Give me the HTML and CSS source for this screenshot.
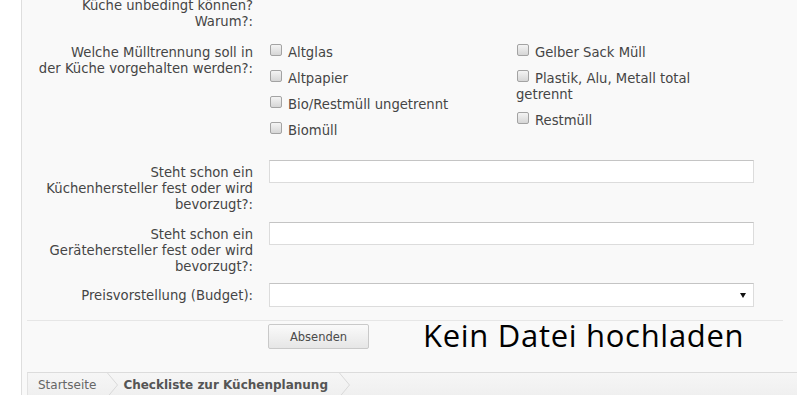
FILE: index.html
```html
<!DOCTYPE html>
<html lang="de">
<head>
<meta charset="utf-8">
<title>Checkliste zur Küchenplanung</title>
<link rel="stylesheet" href="styles.css">
</head>
<body>
<div class="page">
  <form class="form">
    <div class="row row-first">
      <div class="label">Was muss Ihre<br>Küche unbedingt können?<br>Warum?:</div>
      <div class="ctrl"></div>
    </div>
    <div class="row row-checks">
      <div class="label">Welche Mülltrennung soll in<br>der Küche vorgehalten werden?:</div>
      <div class="ctrl checks">
        <ul class="check-col">
          <li><input type="checkbox" class="cb">Altglas</li>
          <li><input type="checkbox" class="cb">Altpapier</li>
          <li><input type="checkbox" class="cb">Bio/Restmüll ungetrennt</li>
          <li><input type="checkbox" class="cb">Biomüll</li>
        </ul>
        <ul class="check-col">
          <li><input type="checkbox" class="cb">Gelber Sack Müll</li>
          <li><input type="checkbox" class="cb">Plastik, Alu, Metall total getrennt</li>
          <li><input type="checkbox" class="cb">Restmüll</li>
        </ul>
      </div>
    </div>
    <div class="row row-text">
      <div class="label">Steht schon ein<br>Küchenhersteller fest oder wird<br>bevorzugt?:</div>
      <div class="ctrl"><input type="text" class="textbox"></div>
    </div>
    <div class="row row-text2">
      <div class="label">Steht schon ein<br>Gerätehersteller fest oder wird<br>bevorzugt?:</div>
      <div class="ctrl"><input type="text" class="textbox"></div>
    </div>
    <div class="row row-select">
      <div class="label">Preisvorstellung (Budget):</div>
      <div class="ctrl">
        <div class="selectbox">
          <svg class="select-arrow" width="6" height="5" viewBox="0 0 6 5"><polygon points="0,0 6,0 3,5" fill="#111"/></svg>
        </div>
      </div>
    </div>
    <div class="submit-row">
      <button type="button" class="button">Absenden</button>
      <span class="note">Kein Datei hochladen</span>
    </div>
  </form>
  <nav class="breadcrumb">
    <span class="crumb">Startseite</span>
    <svg class="chev" width="12" height="24" viewBox="0 0 12 24"><polyline points="0.5,0 10.5,12 0.5,24" fill="none" stroke="#d9d9d9" stroke-width="1"/></svg>
    <span class="crumb current">Checkliste zur Küchenplanung</span>
    <svg class="chev" width="12" height="24" viewBox="0 0 12 24"><polyline points="0.5,0 10.5,12 0.5,24" fill="none" stroke="#d9d9d9" stroke-width="1"/></svg>
  </nav>
</div>
</body>
</html>
```
FILE: styles.css
```css
html, body {
  margin: 0;
  padding: 0;
  background: #ffffff;
}

.page {
  margin-left: 21px;
  border-left: 1px solid #dedede;
  background: #f9f9f9;
  height: 395px;
  overflow: hidden;
  font-family: "DejaVu Sans", Verdana, sans-serif;
  font-size: 13.2px;
  line-height: 16px;
  color: #454545;
}

.form {
  margin: 0;
}

.row {
  display: grid;
  grid-template-columns: 231px 485px;
  column-gap: 16px;
  margin-bottom: 8px;
}

.label {
  text-align: right;
  padding-top: 5px;
  white-space: nowrap;
}

.row-first {
  margin-top: -23px;
  margin-bottom: 10px;
}

.row-checks {
  margin-bottom: 11px;
}

.row-text {
  margin-bottom: 9px;
}

.checks {
  display: grid;
  grid-template-columns: 247px 225px;
  padding-top: 5px;
}

.check-col {
  list-style: none;
  margin: 0;
  padding: 0;
}

.check-col li {
  margin-bottom: 10px;
}

.cb {
  -webkit-appearance: none;
  appearance: none;
  box-sizing: border-box;
  width: 12px;
  height: 12px;
  margin: -1px 6px 0 1px;
  border: 1px solid #a3a3a3;
  border-radius: 2px;
  background: linear-gradient(to bottom, #f4f4f4, #d6d6d6);
  vertical-align: top;
}

.textbox {
  display: block;
  box-sizing: border-box;
  width: 485px;
  height: 23px;
  margin: 0;
  padding: 2px 4px;
  border: 1px solid #dcdcdc;
  border-top-color: #c4c4c4;
  background: #ffffff;
  font: inherit;
}

.selectbox {
  box-sizing: border-box;
  width: 485px;
  height: 24px;
  border: 1px solid #dcdcdc;
  border-top-color: #c4c4c4;
  background: #ffffff;
  display: flex;
  align-items: center;
  justify-content: flex-end;
  padding-right: 7px;
}

.select-arrow {
  display: block;
}

.row-select {
  margin-bottom: 13px;
}

.submit-row {
  margin: 0 14px 0 5px;
  border-top: 1px solid #e6e6e6;
  padding: 3px 0 0 241px;
  display: flex;
  align-items: flex-start;
  gap: 54px;
  height: 52px;
  box-sizing: border-box;
}

.button {
  box-sizing: border-box;
  width: 101px;
  height: 25px;
  margin: 0;
  padding: 0;
  border: 1px solid #c9c9c9;
  border-radius: 2px;
  background: linear-gradient(to bottom, #fafafa, #e6e6e6);
  font-family: "DejaVu Sans", Verdana, sans-serif;
  font-size: 11.5px;
  color: #4a4a4a;
}

.note {
  font-family: "Open Sans", sans-serif;
  font-size: 31px;
  line-height: 22px;
  letter-spacing: 0.7px;
  color: #000000;
}

.breadcrumb {
  margin-left: 5px;
  border-top: 1px solid #dcdcdc;
  border-left: 1px solid #e2e2e2;
  background: linear-gradient(to bottom, #f6f6f6, #efefef);
  height: 24px;
  display: flex;
  align-items: center;
  padding-left: 10px;
  font-size: 12px;
  line-height: 24px;
}

.crumb {
  color: #666666;
}

.crumb.current {
  font-weight: bold;
  color: #555555;
}

.chev {
  display: block;
  margin: 0 4px 0 11px;
}
```
